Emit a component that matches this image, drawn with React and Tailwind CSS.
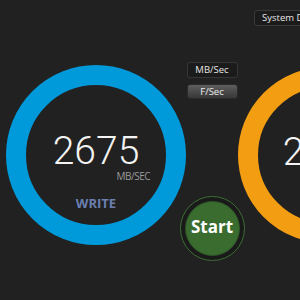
import React from 'react';

// Ring gauge: coloured circle with the value, unit and label inside
function Gauge({ value, unit, label, ring, size, top, pad, labelColor }) {
    return (
        <div
            className={`shrink-0 rounded-full border-[20px] ${ring} ${size} ${top} flex flex-col items-center ${pad}`}
        >
            <div className="font-['Roboto',sans-serif] font-light text-[39px] leading-none text-[#f4f4f4]">
                {value}
            </div>
            <div className="w-full text-right pr-[16px] text-[10px] leading-none tracking-[-0.5px] text-[#9a9a9a]">
                {unit}
            </div>
            <div className={`mt-[16px] text-[13px] leading-none font-bold ${labelColor}`}>
                {label}
            </div>
        </div>
    );
}

export default function App() {
    return (
        <div className="w-[300px] h-[300px] overflow-hidden bg-[#212121] font-['Open_Sans',sans-serif]">
            {/* drive selector */}
            <div className="flex pt-[10px] pl-[254px]">
                <button className="shrink-0 w-[90px] h-[16px] rounded-[3px] border border-[#3a3a3a] bg-[#1b1b1b] text-left pl-[7px] text-[9.5px] leading-none text-[#e6e6e6]">
                    System Disk
                </button>
            </div>

            <div className="flex items-start mt-[36px] pl-[6px]">
                <Gauge
                    value="2675"
                    unit="MB/SEC"
                    label="WRITE"
                    ring="border-[#0099d9]"
                    size="w-[180px] h-[180px]"
                    top="mt-[3px]"
                    pad="pt-[47px]"
                    labelColor="text-[#6a7fb0]"
                />

                <div className="shrink-0 w-[52px] flex flex-col items-center">
                    <button className="w-[51px] h-[16px] rounded-[3px] border border-[#363636] bg-[#1b1b1b] text-[9.5px] leading-none text-[#e6e6e6]">
                        MB/Sec
                    </button>
                    <button className="mt-[6px] w-[51px] h-[15px] rounded-[3px] border border-[#2a2a2a] bg-gradient-to-b from-[#5e5e5e] to-[#383838] text-[9.5px] leading-none text-[#ededed]">
                        F/Sec
                    </button>
                    <div className="mt-[97px] shrink-0 w-[65px] h-[65px] rounded-full border-[1.5px] border-[#3d6e34] bg-[#1a1a1a] flex items-center justify-center">
                        <div className="w-[55px] h-[55px] rounded-full bg-[#3a6c30] border border-[#2c5226] flex items-center justify-center pb-[4px] text-[17px] leading-none font-bold text-white">
                            Start
                        </div>
                    </div>
                </div>

                <Gauge
                    value="2784"
                    unit="MB/SEC"
                    label="READ"
                    ring="border-[#f29d12]"
                    size="w-[176px] h-[176px]"
                    top="mt-[5px]"
                    pad="pt-[46px]"
                    labelColor="text-[#6a7fb0]"
                />
            </div>
        </div>
    );
}
